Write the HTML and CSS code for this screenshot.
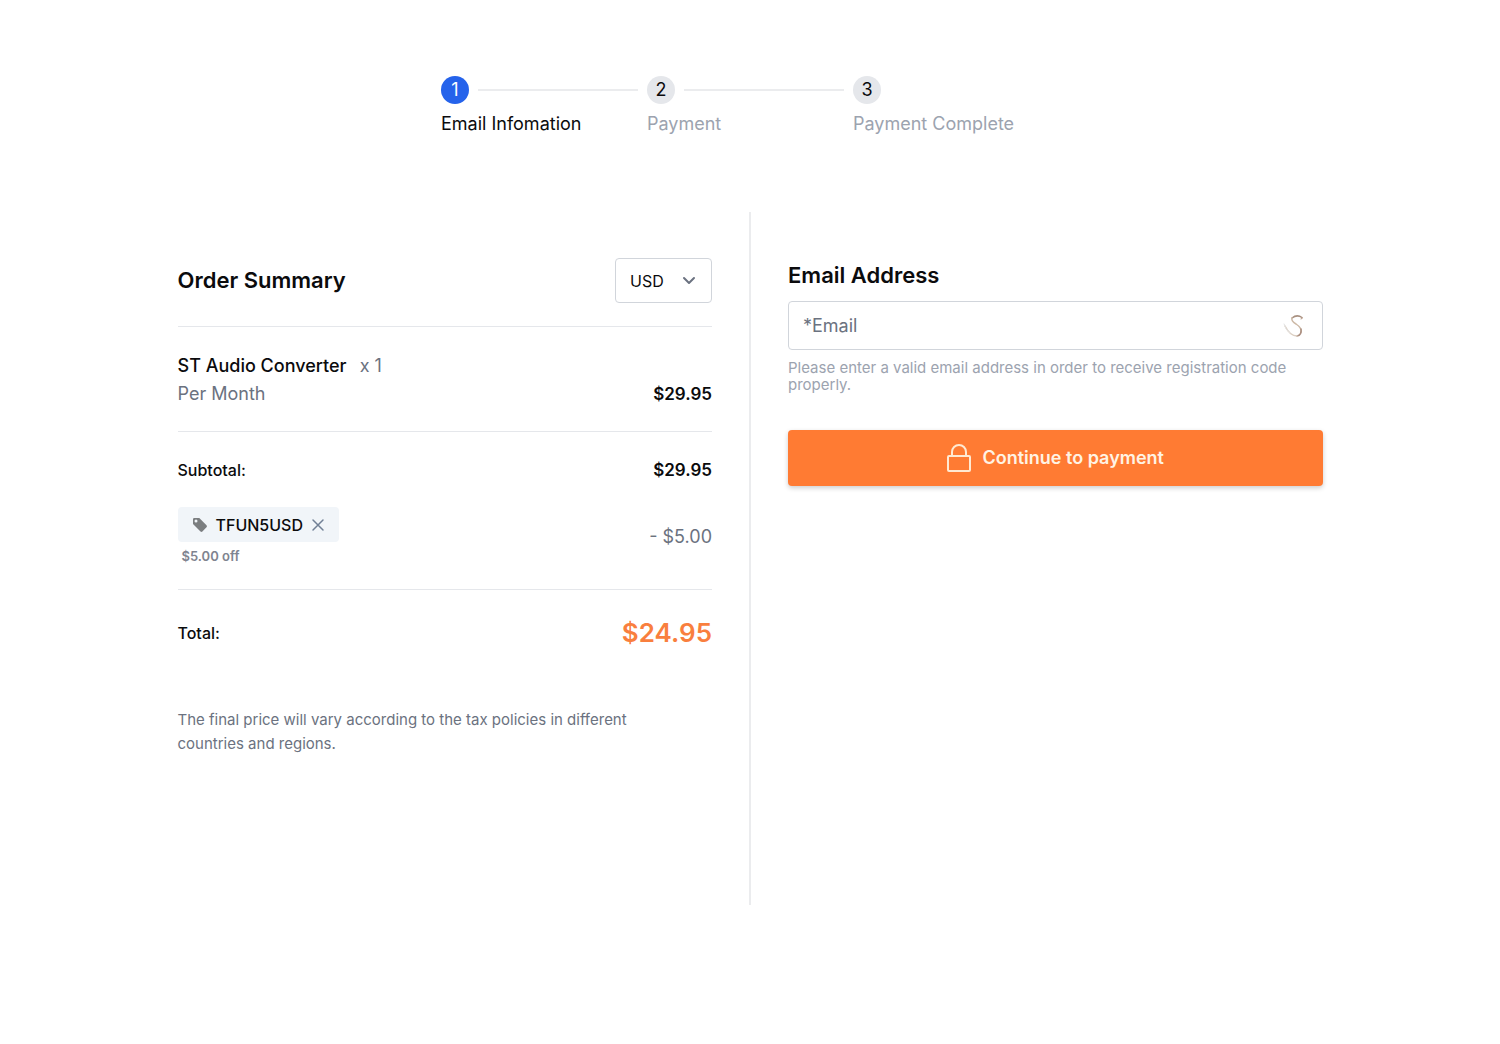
FILE: index.html
```html
<!DOCTYPE html>
<html lang="en">
<head>
    <meta charset="utf-8">
    <meta name="viewport" content="width=device-width, initial-scale=1">
    <title>Checkout</title>
    <link rel="stylesheet" href="styles.css">
</head>
<body>

<header>
    <ol class="steps">
        <li class="step active">
            <span class="step-number">1</span>
            <span class="step-label">Email Infomation</span>
        </li>
        <li class="step">
            <span class="step-number">2</span>
            <span class="step-label">Payment</span>
        </li>
        <li class="step">
            <span class="step-number">3</span>
            <span class="step-label">Payment Complete</span>
        </li>
    </ol>
</header>

<main class="checkout">
    <section class="summary">
        <div class="summary-head">
            <h2>Order Summary</h2>
            <div class="currency">
                <select aria-label="Currency">
                    <option>USD</option>
                    <option>EUR</option>
                    <option>GBP</option>
                </select>
                <svg class="chevron" width="14" height="10" viewBox="0 0 14 10" aria-hidden="true">
                    <path d="M2 2l5 5 5-5" fill="none" stroke="#6b7280" stroke-width="2" stroke-linecap="round" stroke-linejoin="round"/>
                </svg>
            </div>
        </div>

        <div class="item">
            <div>
                <span class="item-name">ST Audio Converter</span>
                <span class="item-count">x 1</span>
                <div class="item-period">Per Month</div>
            </div>
            <span class="price">$29.95</span>
        </div>

        <div class="sums">
            <div class="row">
                <span class="row-label">Subtotal:</span>
                <span class="price">$29.95</span>
            </div>
            <div class="row">
                <div>
                    <div class="coupon">
                        <svg width="16" height="16" viewBox="0 0 16 16" aria-hidden="true">
                            <path fill="#7b7e80" fill-rule="evenodd" d="M1 2.200Q1 1 2.200 1H7.300L14.500 8.200Q15.500 9.200 14.500 10.200L10.400 14.500Q9.500 15.300 8.500 14.400L1 7ZM4 2.500a1.500 1.500 0 1 0 0 3a1.500 1.500 0 0 0 0-3Z"/>
                        </svg>
                        <span>TFUN5USD</span>
                        <button class="coupon-remove" type="button" aria-label="Remove coupon">
                            <svg width="14" height="14" viewBox="0 0 14 14" aria-hidden="true">
                                <path d="M2 2l10 10M12 2L2 12" fill="none" stroke="#718096" stroke-width="1.500" stroke-linecap="round"/>
                            </svg>
                        </button>
                    </div>
                    <div class="coupon-off">$5.00 off</div>
                </div>
                <span class="discount">- $5.00</span>
            </div>
        </div>

        <div class="row total">
            <span class="row-label">Total:</span>
            <span class="total-price">$24.95</span>
        </div>

        <p class="note">The final price will vary according to the tax policies in different countries and regions.</p>
    </section>

    <div class="divider"></div>

    <form class="email-form">
        <label class="email-title" for="email">Email Address</label>
        <div class="email-box">
            <input id="email" type="email" placeholder="*Email">
            <svg width="22" height="26" viewBox="0 0 22 26" fill="none" stroke-linecap="round" aria-hidden="true">
                <path d="M9 5Q14 1 19 4.500" stroke="#a89080" stroke-width="1.500"/>
                <path d="M19 4.500Q20 6 18 6" stroke="#b89a86" stroke-width="1"/>
                <path d="M9 5Q8 8 13 11Q19 15 18 19" stroke="#cdb9a6" stroke-width="1.500"/>
                <path d="M18 16Q19 22 14 23" stroke="#ab8f80" stroke-width="1.500"/>
                <path d="M14 23Q7 23 2 13" stroke="#dccfc2" stroke-width="1.500"/>
                <path d="M1 11Q2 16 7 20" stroke="#e2e2e2" stroke-width="1"/>
            </svg>
        </div>
        <p class="hint">Please enter a valid email address in order to receive registration code properly.</p>
        <button class="continue" type="submit">
            <svg width="24" height="28" viewBox="0 0 24 28" fill="none" stroke="#ffe9d2" stroke-width="2" stroke-linejoin="round" aria-hidden="true">
                <rect x="1" y="12" width="22" height="15" rx="1"/>
                <path d="M5 12V8a7 7 0 0 1 14 0v4"/>
            </svg>
            Continue to payment
        </button>
    </form>
</main>

</body>
</html>
```

FILE: styles.css
```css
* {
    box-sizing: border-box;
}

body {
    margin: 0;
    padding: 76px 24px 24px;
    background-color: #fff;
    color: #0b0b0d;
    font-family: Inter, "Liberation Sans", sans-serif;
    font-size: 18px;
    line-height: 28px;
}

h2, p, ol {
    margin: 0;
    padding: 0;
}

input, select, button {
    font: inherit;
    color: inherit;
}

svg {
    display: block;
    flex: none;
}

/* steps */
.steps {
    display: grid;
    grid-template-columns: repeat(3, 1fr);
    max-width: 618px;
    margin: 0 auto;
    list-style: none;
}

.step {
    display: grid;
    grid-template-columns: 28px 1fr;
    align-items: center;
    column-gap: 9px;
    row-gap: 6px;
    color: #9ca3af;
}

.step:not(:last-child)::after {
    content: "";
    grid-row: 1;
    grid-column: 2;
    height: 2px;
    margin-right: 9px;
    background-color: #ebecee;
}

.step-number {
    height: 28px;
    border-radius: 50%;
    background-color: #e5e7eb;
    color: #0b0b0d;
    text-align: center;
}

.step-label {
    grid-row: 2;
    grid-column: 1 / 3;
    white-space: nowrap;
}

.active {
    color: #0b0b0d;
}

.active .step-number {
    background-color: #2563eb;
    color: #fff;
}

/* two columns */
.checkout {
    display: grid;
    grid-template-columns: 1fr 2px 1fr;
    gap: 37px;
    max-width: 1145px;
    min-height: 693px;
    margin: 74px auto 0;
}

.divider {
    background-color: #ebecee;
}

.summary {
    padding-top: 46px;
}

.email-form {
    padding-top: 47px;
}

.summary-head,
.row {
    display: flex;
    justify-content: space-between;
    align-items: center;
}

.summary-head {
    padding-bottom: 23px;
}

h2,
.email-title {
    font-size: 22px;
    font-weight: 600;
    line-height: 33px;
}

.currency {
    display: grid;
    align-items: center;
}

.currency select {
    grid-area: 1 / 1;
    width: 97px;
    height: 45px;
    padding: 0 14px;
    border: 1px solid #d1d5db;
    border-radius: 4px;
    background-color: #fff;
    font-size: 16px;
    appearance: none;
}

.chevron {
    grid-area: 1 / 1;
    justify-self: end;
    margin-right: 16px;
    pointer-events: none;
}

.item {
    display: flex;
    justify-content: space-between;
    align-items: flex-end;
    padding: 25px 0 23px;
    border-top: 1px solid #e5e7eb;
}

.item-name {
    font-weight: 500;
}

.item-count {
    margin-left: 8px;
}

.item-count,
.item-period,
.discount,
.note {
    color: #6b7280;
}

.sums {
    display: grid;
    gap: 23px;
    padding: 24px 0 23px;
    border-top: 1px solid #e5e7eb;
    border-bottom: 1px solid #e5e7eb;
}

.row-label {
    font-size: 16px;
    font-weight: 500;
}

.price {
    font-size: 17px;
    font-weight: 600;
}

.coupon {
    display: flex;
    align-items: center;
    gap: 8px;
    height: 35px;
    padding: 0 14px;
    border-radius: 4px;
    background-color: #f1f5f9;
    font-size: 16px;
    font-weight: 500;
}

.coupon-remove {
    padding: 0;
    border: 0;
    background: none;
    cursor: pointer;
}

.coupon-off {
    padding: 4px 4px 0;
    color: #7f8490;
    font-size: 13px;
    font-weight: 600;
    line-height: 20px;
}

.total {
    padding-top: 24px;
}

.total-price {
    color: #f97f3e;
    font-size: 26px;
    font-weight: 600;
    line-height: 38px;
}

.note {
    margin-top: 56px;
    padding-right: 48px;
    font-size: 15px;
    line-height: 24px;
}

/* email */
.email-title {
    display: block;
}

.email-box {
    display: grid;
    align-items: center;
    margin-top: 9px;
}

.email-box input {
    grid-area: 1 / 1;
    width: 100%;
    height: 49px;
    padding: 0 48px 0 14px;
    border: 1px solid #d1d5db;
    border-radius: 4px;
}

.email-box input::placeholder {
    color: #6b7280;
}

.email-box svg {
    grid-area: 1 / 1;
    justify-self: end;
    margin-right: 18px;
    pointer-events: none;
}

.hint {
    margin-top: 9px;
    color: #9ca3af;
    font-size: 15px;
    line-height: 17px;
}

.continue {
    display: flex;
    justify-content: center;
    align-items: center;
    gap: 12px;
    width: 100%;
    height: 56px;
    margin-top: 37px;
    border: 0;
    border-radius: 4px;
    background-color: #ff7b33;
    box-shadow: 0 2px 5px rgba(0, 0, 0, .2);
    color: #fff3e4;
    font-weight: 600;
    cursor: pointer;
}
```
